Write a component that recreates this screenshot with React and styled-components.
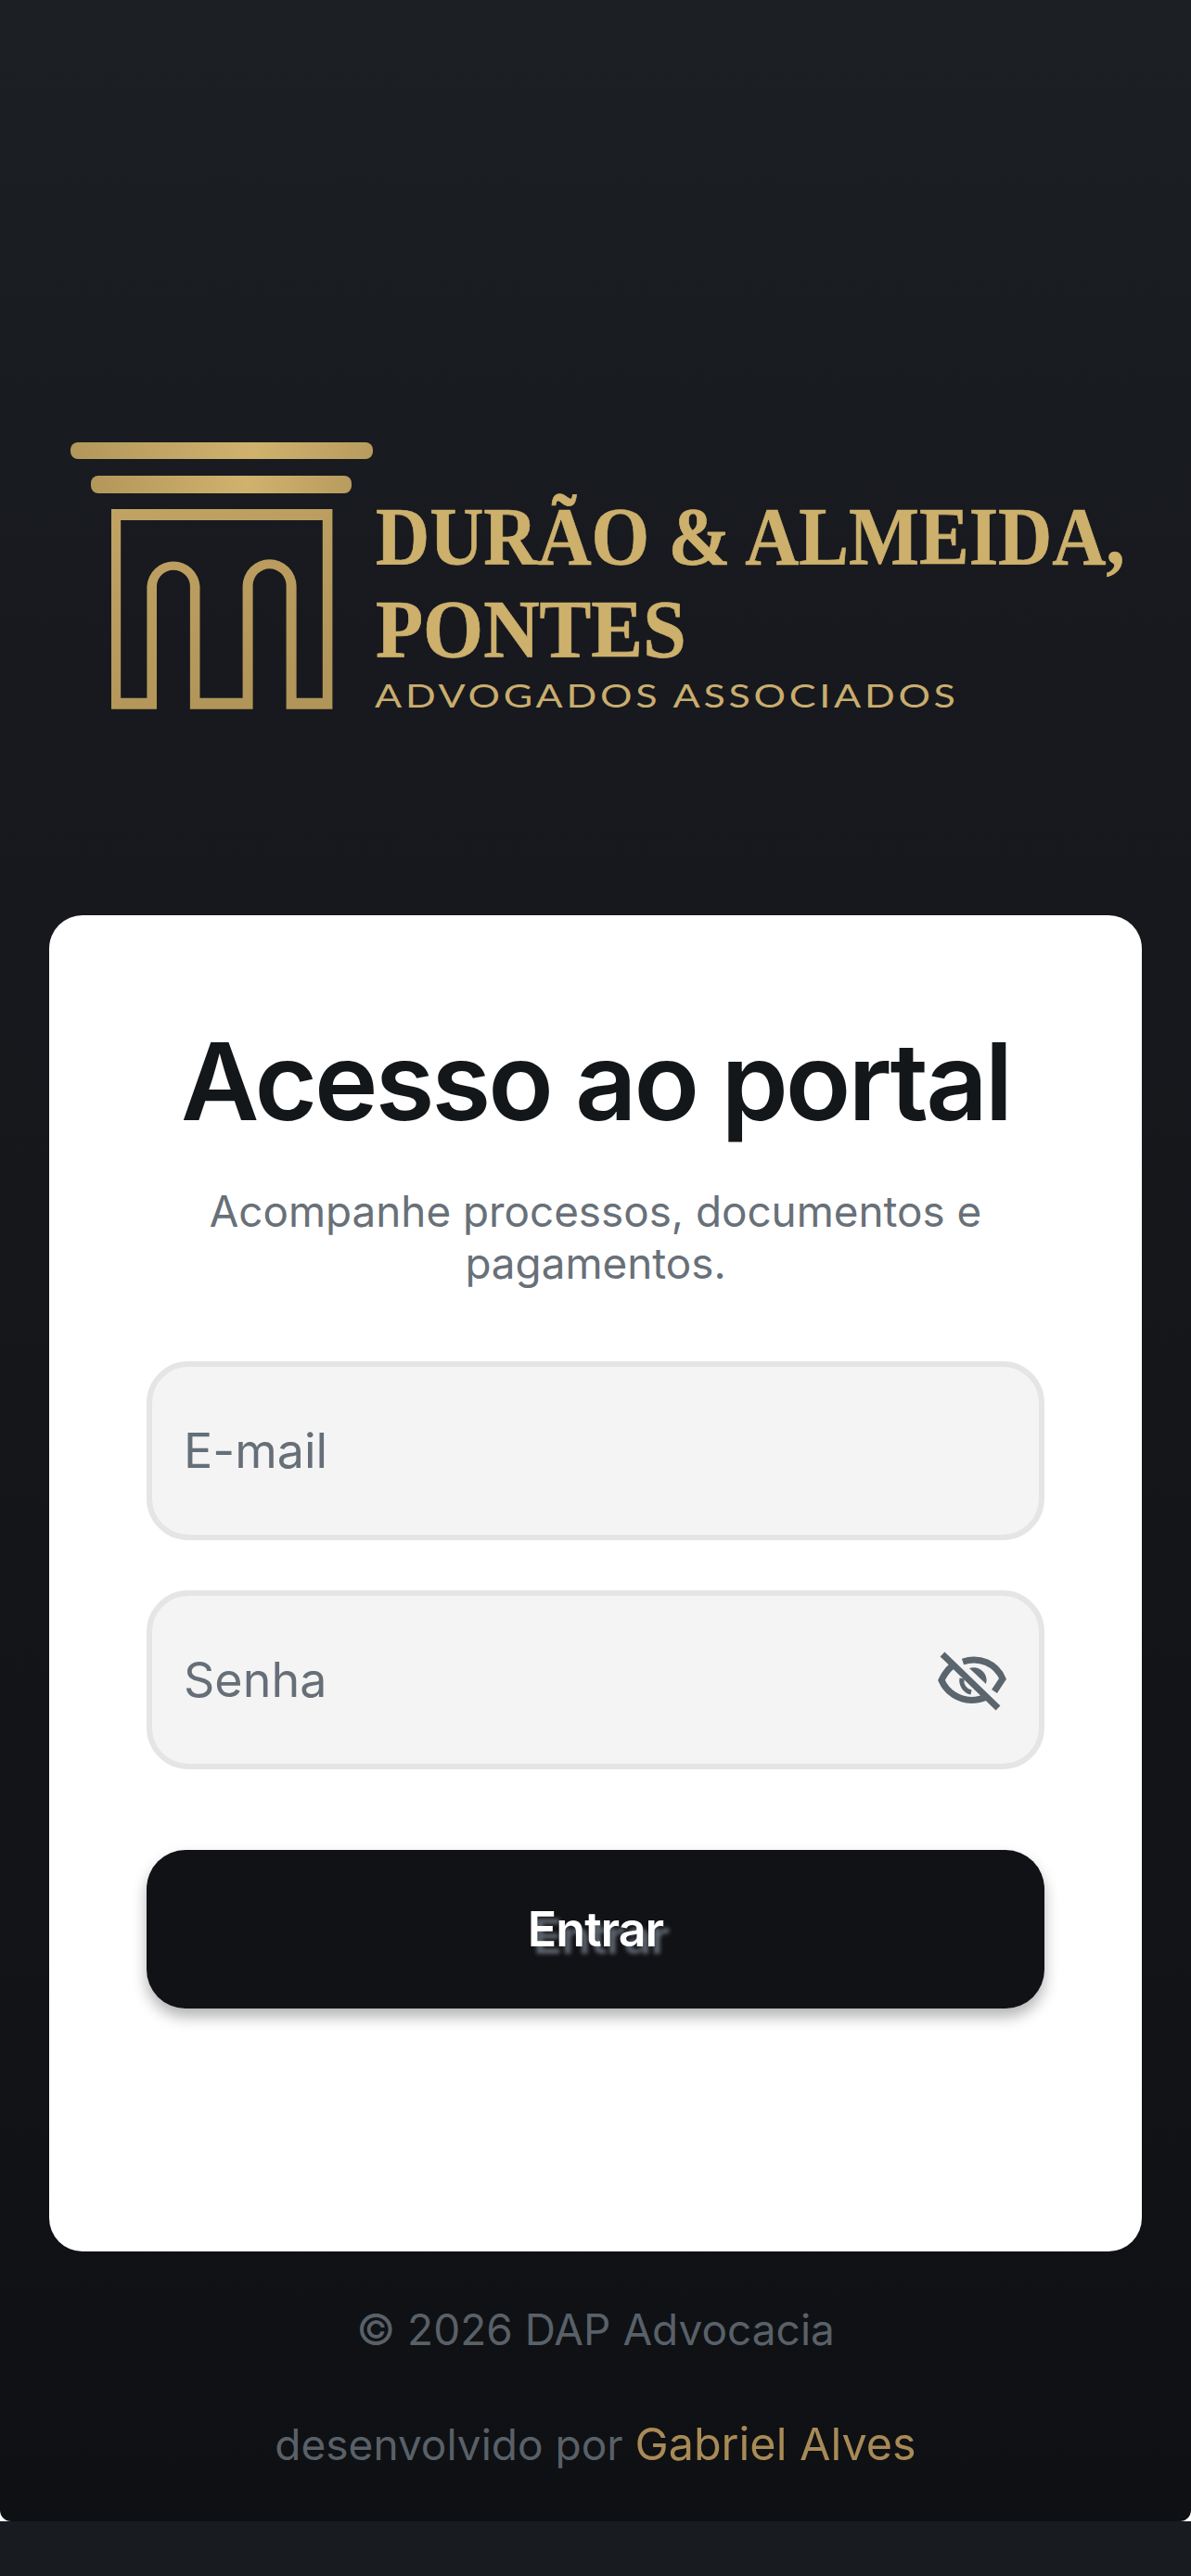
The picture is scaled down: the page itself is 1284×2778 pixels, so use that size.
import React from "react";
import styled, { createGlobalStyle } from "styled-components";

const GlobalStyle = createGlobalStyle`
  html, body {
    margin: 0;
    padding: 0;
    background: #ffffff;
  }
  * {
    box-sizing: border-box;
  }
`;

const Page = styled.div`
  width: 1284px;
  height: 2778px;
  display: flex;
  flex-direction: column;
  background: #ffffff;
  overflow: hidden;
  font-family: Inter, "Liberation Sans", sans-serif;
`;

const Screen = styled.main`
  height: 2719px;
  padding: 477px 53px 0;
  display: flex;
  flex-direction: column;
  background: linear-gradient(180deg, #1c2025 0%, #17191e 25%, #15171b 50%, #0e1013 100%);
  border-radius: 0 0 12px 12px;
`;

const BottomStrip = styled.div`
  flex: 1;
  background: #181c21;
`;

const LogoMark = styled.svg`
  display: block;
  width: 1139px;
  height: 300px;
  margin-left: 23px;
  flex-shrink: 0;
`;

const Card = styled.section`
  margin-top: 210px;
  height: 1441px;
  background: #ffffff;
  border-radius: 36px;
  padding: 110px 105px 0;
  display: flex;
  flex-direction: column;
`;

const Title = styled.h1`
  margin: 0;
  font-size: 116px;
  line-height: 138px;
  font-weight: 600;
  letter-spacing: -3px;
  white-space: nowrap;
  text-align: center;
  color: #14171a;
`;

const Subtitle = styled.p`
  margin: 44px 0 0;
  font-size: 45.8px;
  line-height: 56px;
  font-weight: 400;
  text-align: center;
  color: #687078;
`;

const Field = styled.label`
  height: 193px;
  margin-top: ${(props) => props.$top}px;
  padding: 0 36px 0 34px;
  display: flex;
  align-items: center;
  justify-content: space-between;
  background: #f4f4f4;
  border: 6px solid #e5e5e5;
  border-radius: 45px;
`;

const FieldInput = styled.input`
  flex: 1;
  min-width: 0;
  border: 0;
  outline: 0;
  padding: 0;
  background: transparent;
  font: 400 52px Inter, "Liberation Sans", sans-serif;
  color: #14171a;
  &::placeholder {
    color: #666f78;
    opacity: 1;
  }
`;

const EyeIcon = styled.svg`
  display: block;
  width: 80px;
  height: 80px;
  margin-right: -2px;
  color: #5a656e;
  flex-shrink: 0;
`;

const Submit = styled.button`
  height: 171px;
  margin-top: 87px;
  border: 0;
  border-radius: 42px;
  background: #111216;
  box-shadow: 0 9px 16px rgba(0, 0, 0, 0.3);
  color: #ffffff;
  font: 600 52px Inter, "Liberation Sans", sans-serif;
  letter-spacing: -1px;
  text-shadow: 6px 8px 4px rgba(125, 135, 145, 0.7);
`;

const Footer = styled.footer`
  margin-top: 54px;
  display: flex;
  flex-direction: column;
  align-items: center;
  gap: 64px;
  line-height: 60px;
  font-size: 46px;
  color: #596068;
`;

const Credit = styled.span`
  font-size: 48.5px;
  color: #a88a56;
`;

function EyeOffGlyph() {
  return (
    <EyeIcon viewBox="0 0 80 80" fill="none" stroke="currentColor" strokeWidth="7" aria-hidden="true">
      <path d="M10 12 70 70" />
      <path d="M32 20C50 14 68 22 75 38.5L66 52" />
      <path d="M20 25Q13 31 9 40C15 54 28 61 41 61.5Q50 61.5 58 57.5" />
      <path d="M39 27A14 14 0 0 1 57 44Z" fill="currentColor" strokeWidth="0" />
      <path d="M31 38A13 13 0 0 0 41 53" strokeWidth="5" />
    </EyeIcon>
  );
}

export default function App() {
  return (
    <>
      <GlobalStyle />
      <Page>
        <Screen>
          <LogoMark viewBox="0 0 1139 300" role="img" aria-label="Durão & Almeida, Pontes">
            <defs>
              <linearGradient id="gold" x1="0" y1="0" x2="1" y2="0">
                <stop offset="0" stopColor="#b2975a" />
                <stop offset="0.6" stopColor="#d0b26e" />
                <stop offset="1" stopColor="#b89c5e" />
              </linearGradient>
              <linearGradient id="goldFrame" x1="0" y1="0" x2="0.4" y2="1">
                <stop offset="0" stopColor="#c1a364" />
                <stop offset="1" stopColor="#b29558" />
              </linearGradient>
            </defs>
            <rect x="0" y="0" width="326" height="18" rx="8" fill="url(#gold)" />
            <rect x="22" y="36" width="281" height="19" rx="8" fill="url(#gold)" />
            <path
              fillRule="evenodd"
              fill="url(#goldFrame)"
              d="M44 72H282.4V287.7H232.6V154.3A18 18 0 0 0 196.6 154.3V287.7H128.9V154.3A18 18 0 0 0 93 154.3V287.7H44Z M54.2 84V275.7H82.4V155.3A28.6 28.6 0 0 1 139.5 155.3V275.7H185.6V155.3A29 29 0 0 1 243.6 155.3V275.7H271.8V84Z"
            />
            <g fill="#cdb06c" stroke="#cdb06c" strokeWidth="0.7" fontFamily="'Liberation Serif', serif" fontWeight="700" fontSize="89">
              <text transform="translate(329 131) scale(0.905 1)">DURÃO &amp; ALMEIDA,</text>
              <text transform="translate(329 231) scale(0.94 1)">PONTES</text>
            </g>
            <text
              transform="translate(328 286) scale(1.25 1)"
              fill="#c9ad6e"
              fontFamily="Lato, sans-serif"
              fontSize="34.5"
              letterSpacing="2.95"
            >
              ADVOGADOS ASSOCIADOS
            </text>
          </LogoMark>

          <Card>
            <Title>Acesso ao portal</Title>
            <Subtitle>
              Acompanhe processos, documentos e
              <br />
              pagamentos.
            </Subtitle>
            <Field $top={77}>
              <FieldInput type="email" placeholder="E-mail" />
            </Field>
            <Field $top={54}>
              <FieldInput type="password" placeholder="Senha" />
              <EyeOffGlyph />
            </Field>
            <Submit type="button">Entrar</Submit>
          </Card>

          <Footer>
            <span>© 2026 DAP Advocacia</span>
            <span>
              desenvolvido por <Credit>Gabriel Alves</Credit>
            </span>
          </Footer>
        </Screen>
        <BottomStrip />
      </Page>
    </>
  );
}
